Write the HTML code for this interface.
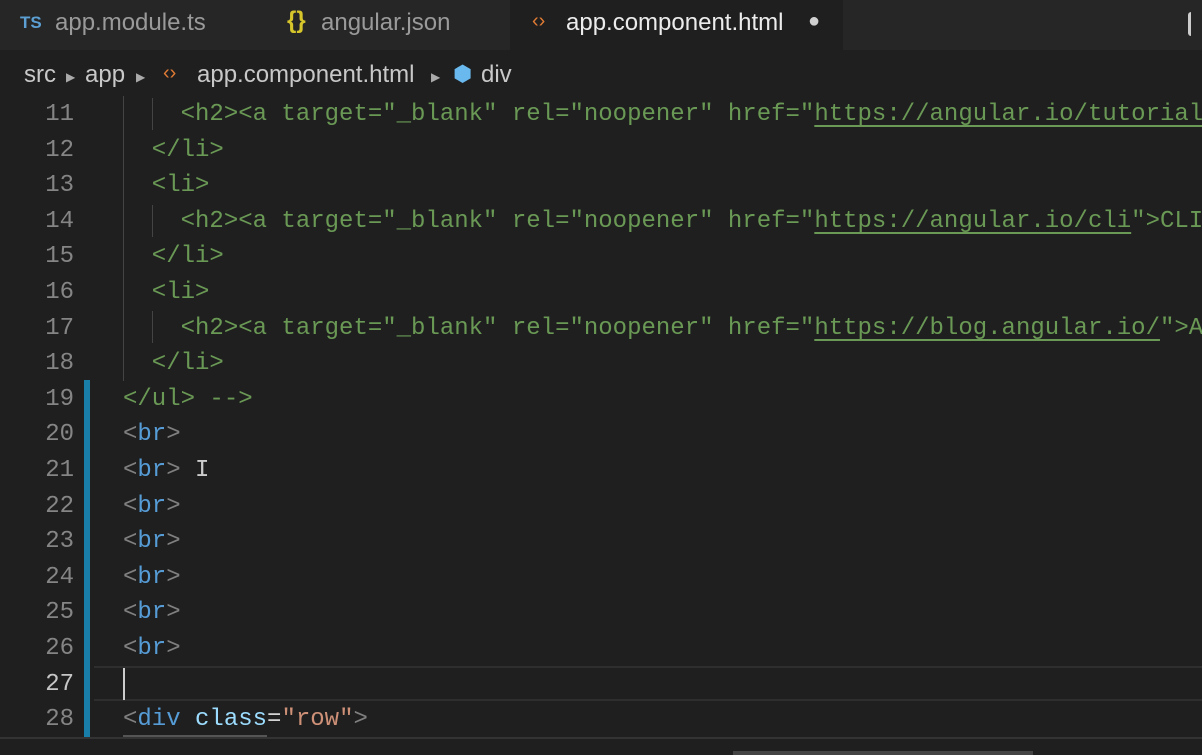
<!DOCTYPE html>
<html><head><style>
html,body{margin:0;padding:0;width:1202px;height:755px;background:#1f1f1f;overflow:hidden;font-family:"Liberation Sans",sans-serif}
.tabs{position:absolute;left:0;top:0;width:1202px;height:50px;background:#262626}
.active{position:absolute;left:510px;top:0;width:333px;height:50px;background:#1f1f1f}
.lb{position:absolute;white-space:nowrap;font-size:24px;line-height:30px;color:#9a9a9a}
.code{position:absolute;left:0;top:97px;font-family:"Liberation Mono",monospace;font-size:24px}
.ln{position:absolute;left:0;width:74px;text-align:right;color:#858585;height:35.6px;line-height:35.6px}
.tx{position:absolute;left:123px;white-space:pre;height:35.6px;line-height:35.6px;color:#d4d4d4}
.c{color:#6a9955}.u{text-decoration:underline;text-underline-offset:5px}
.p{color:#808080}.t{color:#569cd6}.a{color:#9cdcfe}.s{color:#ce9178}
</style></head><body>
<div class="tabs"><div class="active"></div></div>
<span class="lb" style="left:20px;top:8px;font-size:17px;color:#5b9fd3;font-weight:bold">TS</span>
<span class="lb" style="left:55px;top:8px">app.module.ts</span>
<span class="lb" style="left:287px;top:6px;color:#d6c62b;font-weight:bold">{}</span>
<span class="lb" style="left:321px;top:8px">angular.json</span>
<span class="lb" style="left:532px;top:6px;color:#e07b35;font-size:20px">‹›</span>
<span class="lb" style="left:566px;top:8px;color:#ececec">app.component.html</span>
<span class="lb" style="left:808px;top:6px;color:#d0d0d0;font-size:20px">●</span>
<div style="position:absolute;left:1188px;top:12px;width:14px;height:24px;border-left:3px solid #ccc;border-radius:3px"></div>
<span class="lb" style="left:24px;top:60px;color:#c8c8c8">src</span>
<span class="lb" style="left:66px;top:62px;font-size:12px;color:#aaa">▶</span>
<span class="lb" style="left:85px;top:60px;color:#c8c8c8">app</span>
<span class="lb" style="left:136px;top:62px;font-size:12px;color:#aaa">▶</span>
<span class="lb" style="left:163px;top:58px;color:#e07b35;font-size:20px">‹›</span>
<span class="lb" style="left:197px;top:60px;color:#c8c8c8">app.component.html</span>
<span class="lb" style="left:431px;top:62px;font-size:12px;color:#aaa">▶</span>
<span class="lb" style="left:453px;top:59px;color:#69b8ee;font-size:22px">⬢</span>
<span class="lb" style="left:481px;top:60px;color:#c8c8c8">div</span>
<div style="position:absolute;left:84px;top:380px;width:6px;height:357px;background:#1a7fa8"></div>
<div style="position:absolute;left:123px;top:96px;width:1px;height:285px;background:#444"></div>
<div style="position:absolute;left:152px;top:98px;width:1px;height:32px;background:#444"></div>
<div style="position:absolute;left:152px;top:205px;width:1px;height:32px;background:#444"></div>
<div style="position:absolute;left:152px;top:311px;width:1px;height:32px;background:#444"></div>
<div style="position:absolute;left:94px;top:666px;width:1108px;height:35px;border-top:2px solid #2e2e2e;border-bottom:2px solid #2e2e2e;box-sizing:border-box"></div>
<div style="position:absolute;left:123px;top:668px;width:2px;height:32px;background:#ccc"></div>
<div style="position:absolute;left:123px;top:735px;width:144px;height:4px;background:#555"></div>
<div style="position:absolute;left:0;top:737px;width:1202px;height:2px;background:#333"></div>
<div style="position:absolute;left:733px;top:751px;width:300px;height:4px;background:#444"></div>
<div class="code">
<div class="ln" style="top:0">11</div><div class="tx c" style="top:0">    &lt;h2&gt;&lt;a target="_blank" rel="noopener" href="<span class="u">https://angular.io/tutorial</span></div>
<div class="ln" style="top:35.6px">12</div><div class="tx c" style="top:35.6px">  &lt;/li&gt;</div>
<div class="ln" style="top:71.2px">13</div><div class="tx c" style="top:71.2px">  &lt;li&gt;</div>
<div class="ln" style="top:106.8px">14</div><div class="tx c" style="top:106.8px">    &lt;h2&gt;&lt;a target="_blank" rel="noopener" href="<span class="u">https://angular.io/cli</span>"&gt;CLI</div>
<div class="ln" style="top:142.4px">15</div><div class="tx c" style="top:142.4px">  &lt;/li&gt;</div>
<div class="ln" style="top:178px">16</div><div class="tx c" style="top:178px">  &lt;li&gt;</div>
<div class="ln" style="top:213.6px">17</div><div class="tx c" style="top:213.6px">    &lt;h2&gt;&lt;a target="_blank" rel="noopener" href="<span class="u">https://blog.angular.io/</span>"&gt;A</div>
<div class="ln" style="top:249.2px">18</div><div class="tx c" style="top:249.2px">  &lt;/li&gt;</div>
<div class="ln" style="top:284.8px">19</div><div class="tx c" style="top:284.8px">&lt;/ul&gt; --&gt;</div>
<div class="ln" style="top:320.4px">20</div><div class="tx" style="top:320.4px"><span class="p">&lt;</span><span class="t">br</span><span class="p">&gt;</span></div>
<div class="ln" style="top:356px">21</div><div class="tx" style="top:356px"><span class="p">&lt;</span><span class="t">br</span><span class="p">&gt;</span> <span style="color:#ccc">I</span></div>
<div class="ln" style="top:391.6px">22</div><div class="tx" style="top:391.6px"><span class="p">&lt;</span><span class="t">br</span><span class="p">&gt;</span></div>
<div class="ln" style="top:427.2px">23</div><div class="tx" style="top:427.2px"><span class="p">&lt;</span><span class="t">br</span><span class="p">&gt;</span></div>
<div class="ln" style="top:462.8px">24</div><div class="tx" style="top:462.8px"><span class="p">&lt;</span><span class="t">br</span><span class="p">&gt;</span></div>
<div class="ln" style="top:498.4px">25</div><div class="tx" style="top:498.4px"><span class="p">&lt;</span><span class="t">br</span><span class="p">&gt;</span></div>
<div class="ln" style="top:534px">26</div><div class="tx" style="top:534px"><span class="p">&lt;</span><span class="t">br</span><span class="p">&gt;</span></div>
<div class="ln" style="top:569.6px;color:#c6c6c6">27</div>
<div class="ln" style="top:605.2px">28</div><div class="tx" style="top:605.2px"><span class="p">&lt;</span><span class="t">div</span> <span class="a">class</span><span style="color:#d4d4d4">=</span><span class="s">"row"</span><span class="p">&gt;</span></div>
</div>
</body></html>
